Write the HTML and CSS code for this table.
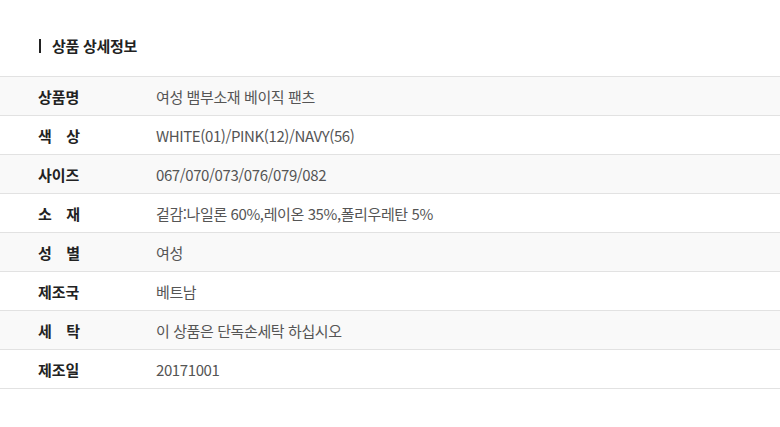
FILE: index.html
```
<!DOCTYPE html>
<html lang="ko">
<head>
<meta charset="utf-8">
<link rel="stylesheet" href="styles.css">
</head>
<body>
<section class="detail">
  <h2 class="title">상품 상세정보</h2>
  <div class="table">
    <div class="row alt"><span class="label">상품명</span><span class="value">여성 뱀부소재 베이직 팬츠</span></div>
    <div class="row"><span class="label spread"><span>색</span><span>상</span></span><span class="value">WHITE(01)/PINK(12)/NAVY(56)</span></div>
    <div class="row alt"><span class="label">사이즈</span><span class="value">067/070/073/076/079/082</span></div>
    <div class="row"><span class="label spread"><span>소</span><span>재</span></span><span class="value">겉감:나일론 60%,레이온 35%,폴리우레탄 5%</span></div>
    <div class="row alt"><span class="label spread"><span>성</span><span>별</span></span><span class="value">여성</span></div>
    <div class="row"><span class="label">제조국</span><span class="value">베트남</span></div>
    <div class="row alt"><span class="label spread"><span>세</span><span>탁</span></span><span class="value">이 상품은 단독손세탁 하십시오</span></div>
    <div class="row"><span class="label">제조일</span><span class="value">20171001</span></div>
  </div>
</section>
</body>
</html>
```
FILE: styles.css
```
* { box-sizing: border-box; }
html, body { margin: 0; padding: 0; background: #fff; }
body {
  font-family: "Noto Sans CJK KR", "Noto Sans", sans-serif;
  color: #222;
}
.detail { padding-top: 39px; }
.title {
  margin: 0 0 23px 39px;
  padding-left: 11px;
  border-left: 2px solid #222;
  font-size: 15px;
  font-weight: 700;
  line-height: 14px;
  height: 14px;
  letter-spacing: -0.3px;
}
.table { border-top: 1px solid #e2e2e2; }
.row {
  display: flex;
  align-items: center;
  height: 39px;
  border-bottom: 1px solid #e2e2e2;
  font-size: 15px;
}
.row.alt { background: #f9f9f9; }
.label {
  width: 42px;
  margin-left: 38px;
  margin-right: 76px;
  font-weight: 700;
  color: #222;
  white-space: nowrap;
}
.label.spread {
  display: flex;
  justify-content: space-between;
}
.value {
  color: #555;
  font-weight: 400;
  letter-spacing: -0.4px;
}
```
